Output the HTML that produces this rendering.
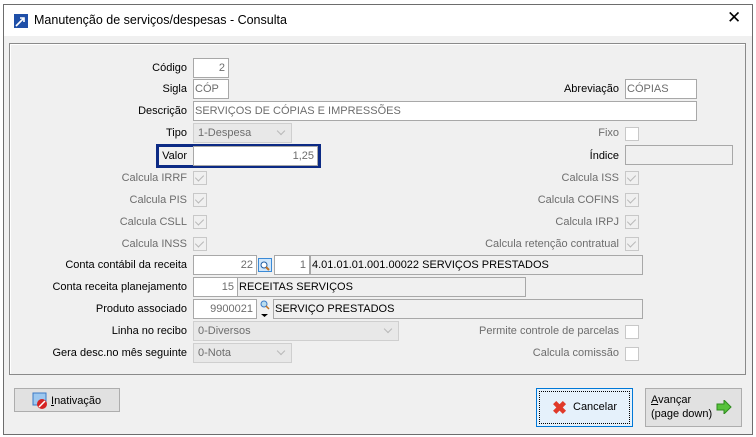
<!DOCTYPE html>
<html><head><meta charset="utf-8"><style>
*{box-sizing:border-box;margin:0;padding:0}
body{width:756px;height:437px;background:#fff;font-family:"Liberation Sans",Tahoma,sans-serif;font-size:11px;color:#000;position:relative;overflow:hidden}
.win{position:absolute;left:3px;top:4px;width:750px;height:431px;border:1px solid #6d6d6d;background:#f0f0f0}
.title{position:absolute;left:0;top:0;width:748px;height:31px;background:#fff}
.a{position:absolute}
.lbl{position:absolute;text-align:right;white-space:nowrap;line-height:20px}
.g{color:#6d6d6d}
.box{position:absolute;height:20px;border:1px solid #a8a8a8;background:#fff;line-height:18px;padding:0 3px;color:#6d6d6d;white-space:nowrap;overflow:hidden}
.gray{background:#f0f0f0;color:#000;padding:0 1px}
.r{text-align:right}
.cb{position:absolute;width:14px;height:14px;border:1px solid #c8c8c8;background:#fff}
.cb.d{background:#f0f0f0}
.cb.d:after{content:"";position:absolute;left:3px;top:1px;width:4px;height:7px;border:solid #b8b8b8;border-width:0 1px 1px 0;transform:rotate(45deg)}
.sel{position:absolute;height:20px;border:1px solid #cfcfcf;background:#e8e8e8;color:#6d6d6d;line-height:18px;padding:0 4px}
.sel:after{content:"";position:absolute;right:7px;top:4px;width:5px;height:5px;border:solid #b8b8b8;border-width:0 1px 1px 0;transform:rotate(45deg)}
.btn{position:absolute;border:1px solid #adadad;background:#e1e1e1}
</style></head><body>
<div class="win">
<div class="title">
<svg class="a" style="left:10px;top:9px" width="14" height="14"><rect width="14" height="14" fill="#1f4fa8"/><path d="M2 12 L9 5 M6 4h4v4" stroke="#fff" stroke-width="1.6" fill="none"/></svg>
<div class="a" style="left:30px;top:8px;font-size:12.5px">Manutenção de serviços/despesas - Consulta</div>
<div class="a" style="left:723px;top:3px;font-size:17px;font-weight:300">✕</div>
</div>
</div>
<div class="a" style="left:9px;top:43px;width:737px;height:332px;border:1px solid #8a8a8a;box-shadow:inset 1px 1px 0 #fff"></div>

<div class="lbl" style="right:569px;top:58px">Código</div><div class="box r" style="left:193px;top:58px;width:36px">2</div>
<div class="lbl" style="right:569px;top:79px">Sigla</div><div class="box" style="left:193px;top:79px;width:36px;padding:0 1px">CÓP</div>
<div class="lbl" style="right:137px;top:79px">Abreviação</div><div class="box" style="left:625px;top:79px;width:72px;padding:0 1px">CÓPIAS</div>
<div class="lbl" style="right:569px;top:101px">Descrição</div><div class="box" style="left:193px;top:101px;width:504px;padding:0 1px">SERVIÇOS DE CÓPIAS E IMPRESSÕES</div>
<div class="lbl" style="right:569px;top:123px">Tipo</div><div class="sel" style="left:193px;top:123px;width:99px">1-Despesa</div>
<div class="lbl g" style="right:137px;top:123px">Fixo</div><div class="cb" style="left:625px;top:127px"></div>
<div class="a" style="left:156px;top:144px;width:165px;height:24px;border:3px solid #0c2a84"></div>
<div class="lbl" style="right:569px;top:146px">Valor</div><div class="box r" style="left:193px;top:146px;width:125px">1,25</div>
<div class="lbl" style="right:137px;top:146px">Índice</div><div class="box gray" style="left:625px;top:145px;width:108px"></div>

<div class="lbl g" style="right:569px;top:168px">Calcula IRRF</div><div class="cb d" style="left:193px;top:171px"></div>
<div class="lbl g" style="right:569px;top:190px">Calcula PIS</div><div class="cb d" style="left:193px;top:193px"></div>
<div class="lbl g" style="right:569px;top:212px">Calcula CSLL</div><div class="cb d" style="left:193px;top:215px"></div>
<div class="lbl g" style="right:569px;top:234px">Calcula INSS</div><div class="cb d" style="left:193px;top:237px"></div>
<div class="lbl g" style="right:137px;top:168px">Calcula ISS</div><div class="cb d" style="left:625px;top:171px"></div>
<div class="lbl g" style="right:137px;top:190px">Calcula COFINS</div><div class="cb d" style="left:625px;top:193px"></div>
<div class="lbl g" style="right:137px;top:212px">Calcula IRPJ</div><div class="cb d" style="left:625px;top:215px"></div>
<div class="lbl g" style="right:137px;top:234px">Calcula retenção contratual</div><div class="cb d" style="left:625px;top:237px"></div>

<div class="lbl" style="right:569px;top:255px">Conta contábil da receita</div>
<div class="box r" style="left:193px;top:255px;width:64px">22</div>
<svg class="a" style="left:258px;top:258px" width="14" height="14"><rect x=".5" y=".5" width="13" height="13" fill="#cfe6fb" stroke="#3b8ad6"/><circle cx="6" cy="7" r="3" fill="#fff" stroke="#1c5aa0"/><path d="M8 9l3 3" stroke="#c07020" stroke-width="2"/></svg>
<div class="box r" style="left:274px;top:255px;width:36px">1</div>
<div class="box gray" style="left:310px;top:255px;width:333px">4.01.01.01.001.00022 SERVIÇOS PRESTADOS</div>
<div class="lbl" style="right:569px;top:277px">Conta receita planejamento</div>
<div class="box r" style="left:193px;top:277px;width:45px">15</div>
<div class="box gray" style="left:237px;top:277px;width:289px">RECEITAS SERVIÇOS</div>
<div class="lbl" style="right:569px;top:299px">Produto associado</div>
<div class="box r" style="left:193px;top:299px;width:64px">9900021</div>
<svg class="a" style="left:259px;top:299px" width="12" height="20"><circle cx="5" cy="5" r="3" fill="#bde" stroke="#3b7ac6"/><path d="M7 7l3 3" stroke="#c07020" stroke-width="1.5"/><path d="M2 15h7l-3.5 3z" fill="#000"/></svg>
<div class="box gray" style="left:273px;top:299px;width:370px">SERVIÇO PRESTADOS</div>
<div class="lbl" style="right:569px;top:321px">Linha no recibo</div><div class="sel" style="left:193px;top:321px;width:206px">0-Diversos</div>
<div class="lbl" style="right:569px;top:343px">Gera desc.no mês seguinte</div><div class="sel" style="left:193px;top:343px;width:99px">0-Nota</div>
<div class="lbl g" style="right:137px;top:321px">Permite controle de parcelas</div><div class="cb" style="left:625px;top:325px"></div>
<div class="lbl g" style="right:137px;top:343px">Calcula comissão</div><div class="cb" style="left:625px;top:347px"></div>

<div class="btn" style="left:14px;top:388px;width:106px;height:24px"></div>
<svg class="a" style="left:32px;top:392px" width="18" height="18"><rect x="1" y="1" width="13" height="12" fill="#9cc7ef" stroke="#3b7ac6"/><circle cx="10" cy="12" r="5" fill="#d52222"/><path d="M7 15l6-6" stroke="#fff" stroke-width="1.5"/></svg>
<div class="a" style="left:51px;top:395px"><u>I</u>nativação</div>

<div class="btn" style="left:536px;top:388px;width:97px;height:39px;background:#e5f1fb;border:1px solid #0078d7"></div>
<div class="a" style="left:539px;top:391px;width:91px;height:33px;border:1px dotted #000"></div>
<div class="a" style="left:552px;top:398px;font-size:18px;color:#e03a2a;font-weight:bold">✖</div>
<div class="a" style="left:573px;top:401px">Cancelar</div>

<div class="btn" style="left:645px;top:388px;width:97px;height:39px"></div>
<div class="a" style="left:651px;top:393px;line-height:14px"><u>A</u>vançar<br>(page down)</div>
<svg class="a" style="left:716px;top:400px" width="16" height="14"><path d="M1 4h7V0l7 7-7 7V10H1z" fill="#56c23a" stroke="#2e8a1e"/></svg>
</body></html>
